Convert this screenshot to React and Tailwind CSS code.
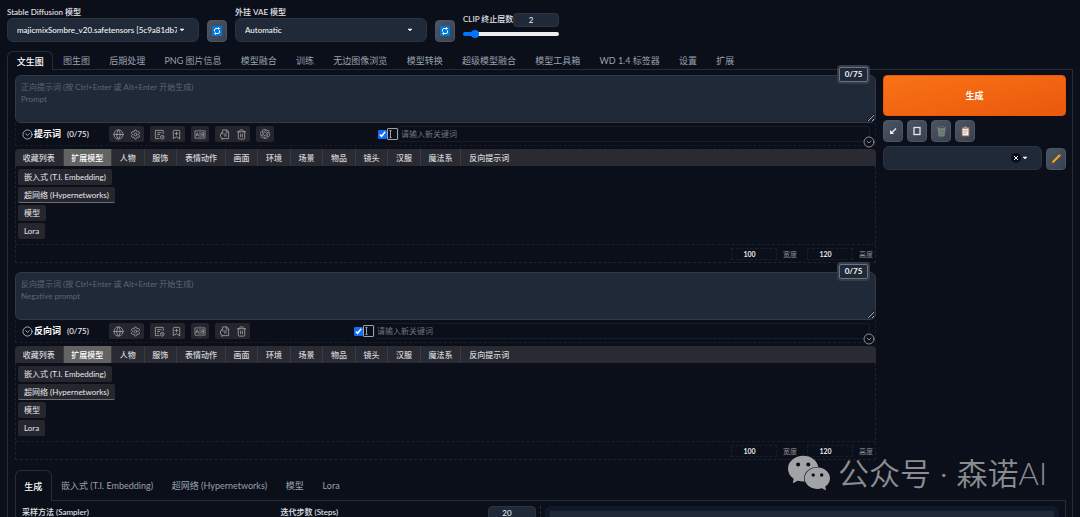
import { useState } from 'react';
import { Globe, Settings, Trash2, CircleChevronDown, BookmarkPlus } from 'lucide-react';
import { SiOpenai, SiWechat } from 'react-icons/si';

const mainTabs = ['文生图', '图生图', '后期处理', 'PNG 图片信息', '模型融合', '训练', '无边图像浏览', '模型转换', '超级模型融合', '模型工具箱', 'WD 1.4 标签器', '设置', '扩展'];
const keywordTabs = ['收藏列表', '扩展模型', '人物', '服饰', '表情动作', '画面', '环境', '场景', '物品', '镜头', '汉服', '魔法系', '反向提示词'];
const modelGroups = ['嵌入式 (T.I. Embedding)', '超网络 (Hypernetworks)', '模型', 'Lora'];
const extraTabs = ['生成', '嵌入式 (T.I. Embedding)', '超网络 (Hypernetworks)', '模型', 'Lora'];

function RefreshIcon() {
  return (
    <svg className="w-[10px] h-[10px]" viewBox="0 0 20 20" fill="none">
      <rect width="20" height="20" rx="1" fill="#0078d7" />
      <path d="M5 11V8q0-3 3-3h5M15 9v3q0 3-3 3H7" stroke="#fff" strokeWidth="2" />
      <path d="M12 2l4 3-4 3zM8 12l-4 3 4 3z" fill="#fff" />
    </svg>
  );
}

function ArrowIcon() {
  return (
    <svg className="w-[10px] h-[10px]" viewBox="0 0 20 20" fill="none">
      <path d="M16 5L8 13" stroke="#f3f4f6" strokeWidth="2.5" />
      <path d="M4 8v8h8z" fill="#f3f4f6" />
    </svg>
  );
}

function CardIcon() {
  return (
    <svg className="w-[10px] h-[10px]" viewBox="0 0 20 20" fill="none">
      <rect x="4" y="3" width="12" height="14" stroke="#e5e7eb" strokeWidth="2.6" />
    </svg>
  );
}

function BasketIcon() {
  return (
    <svg className="w-[11px] h-[11px]" viewBox="0 0 22 22" fill="none">
      <path d="M3 3h16l-2 17q-6 2-12 0z" fill="#7b8987" />
      <path d="M5 7l11 12M9 5l8 9M5 13l6 7M17 7L6 19M13 5l-8 9M17 13l-6 7" stroke="#4c5957" strokeWidth="1" />
      <ellipse cx="11" cy="3.5" rx="8.5" ry="2" fill="#39433f" stroke="#9aa7a3" strokeWidth="1" />
    </svg>
  );
}

function ClipboardIcon() {
  return (
    <svg className="w-[11px] h-[11px]" viewBox="0 0 22 22" fill="none">
      <rect x="3" y="2" width="16" height="19" rx="1" fill="#a65f33" />
      <path d="M5 5h12v14H5z" fill="#f4f1ee" />
      <path d="M8 1h6v5H8z" fill="#8b949c" />
      <path d="M7 9h8M7 12h8M7 15h5" stroke="#9aa0a8" strokeWidth="1.2" />
    </svg>
  );
}

function PencilIcon() {
  return (
    <svg className="w-[12px] h-[12px]" viewBox="0 0 24 24" fill="none">
      <path d="M3 21l1-5 4 4z" fill="#d9480f" />
      <path d="M4 17L18 3l3 3L7 20z" fill="#fbb11b" />
      <path d="M17 4l2-2 3 3-2 2z" fill="#ef8a2f" />
      <path d="M6 19L20 5" stroke="#d97706" strokeWidth="1" />
    </svg>
  );
}

function HistoryIcon() {
  return (
    <svg className="w-[11px] h-[11px]" viewBox="0 0 24 24" fill="none" stroke="currentColor" strokeWidth="2">
      <path d="M20 11V3H3v18h9M7 8h9M7 12h6M7 16h3" />
      <circle cx="18" cy="18" r="4" />
      <path d="M18 16v2h2" />
    </svg>
  );
}

function TranslateIcon() {
  return (
    <svg className="w-[12px] h-[11px]" viewBox="0 0 26 24" fill="none" stroke="currentColor" strokeWidth="1.8">
      <path d="M11 4H2v16h9M15 4h9v16h-9M13 1v22" />
      <path d="M4 16l3-8 3 8M5 13h4M17 8h4v8h-4zM17 12h4" />
    </svg>
  );
}

function CopyIcon() {
  return (
    <svg className="w-[11px] h-[11px]" viewBox="0 0 24 24" fill="none" stroke="currentColor" strokeWidth="2">
      <path d="M8 7V2h9l4 4v15h-6M16 2v5h5M11 11h6M11 15h6" />
      <path d="M7 8q-5 2-4 8 1 4 5 5h7M5 19l3 2-2 3M4 9l4-1 1 4" />
    </svg>
  );
}

function AppendIcon() {
  return (
    <svg className="w-[11px] h-[12px] shrink-0" viewBox="0 0 22 24" fill="none" stroke="#a1a1aa" strokeWidth="2">
      <rect x="1" y="1" width="20" height="22" rx="1" />
      <path d="M7 5v14M5 5h4M5 19h4" />
    </svg>
  );
}

function Caret({ className }) {
  return (
    <svg className={`w-[6px] h-[4px] pointer-events-none ${className}`} viewBox="0 0 6 4">
      <path d="M1 1h4L3 3z" fill="#f3f4f6" stroke="#f3f4f6" strokeWidth="0.6" />
    </svg>
  );
}

function ToolButton({ label, children }) {
  return (
    <button
      type="button"
      aria-label={label}
      className="h-[22px] w-[20px] rounded border border-[#4b5563] bg-linear-to-br from-[#4b5563] to-[#374151] flex items-center justify-center"
    >
      {children}
    </button>
  );
}

function ModelSelect({ id, label, value }) {
  return (
    <div className="w-[192px]">
      <label htmlFor={id} className="block h-[12px] leading-[12px] font-medium text-gray-200">{label}</label>
      <div className="relative">
        <select
          id={id}
          className="block w-full h-[24px] appearance-none rounded-md border border-[#2a3445] bg-[#1f2937] pl-[9px] pr-[21px] font-medium text-gray-100"
        >
          <option>{value}</option>
        </select>
        <Caret className="absolute right-[14px] top-[10px]" />
      </div>
    </div>
  );
}

function TabBar({ tabs, active, onSelect, className, listClassName }) {
  return (
    <nav className={`flex text-[9px] ${className}`}>
      <div className={`flex ${listClassName}`}>
        {tabs.map((name) => (
          <button
            key={name}
            type="button"
            onClick={() => onSelect(name)}
            className={`flex-auto whitespace-nowrap pt-[2px] ${name === active ? 'rounded-t-md border-x border-t border-[#252d3a] px-[8px] font-medium text-white' : 'border-b border-[#252d3a] px-[9px] text-gray-400'}`}
          >
            {name}
          </button>
        ))}
      </div>
      <div className="flex-1 border-b border-[#252d3a]" />
    </nav>
  );
}

function IconGroup({ items }) {
  return (
    <div className="flex h-[16px] gap-px rounded-xs bg-[#25262d] px-px text-[#97989c]">
      {items.map(([name, icon]) => (
        <button key={name} type="button" aria-label={name} className="w-[16px] flex items-center justify-center">
          {icon}
        </button>
      ))}
    </div>
  );
}

function PromptBlock({ id, title, placeholder, hasAi }) {
  const [active, setActive] = useState('扩展模型');

  return (
    <section>
      <div className="relative">
        <textarea
          aria-label={title}
          placeholder={placeholder}
          className="block w-full h-[48px] resize-y rounded-md border border-[#2f3a4a] bg-[#1f2937] px-[5px] py-[5px] leading-[12px] text-gray-200 placeholder:text-[#5d6776]"
        />
        <span className="absolute right-[8px] top-[-8px] h-[15px] w-[29px] rounded-xs border border-[#6b7280] bg-[#1f2937] text-center leading-[13px] font-bold text-gray-100 ring-2 ring-[#363d49]">
          0/75
        </span>
      </div>

      <div className="relative flex h-[23px] items-center border-x border-b border-dashed border-[#171e2a] pl-[6px] pr-[5px]">
        <div className="flex w-[87px] items-center gap-px">
          <CircleChevronDown size={11} strokeWidth={1.5} className="text-gray-200" />
          <h2 className="text-[9px] font-bold text-white">{title}</h2>
          <span className="ml-[5px] font-medium text-gray-100">(0/75)</span>
        </div>
        <div className="flex gap-[6px]">
          <IconGroup items={[['语言', <Globe size={11} />], ['设置', <Settings size={11} />]]} />
          <IconGroup items={[['历史', <HistoryIcon />], ['收藏', <BookmarkPlus size={11} />]]} />
          <IconGroup items={[['翻译', <TranslateIcon />]]} />
          <IconGroup items={[['复制', <CopyIcon />], ['删除', <Trash2 size={11} />]]} />
          {hasAi && <IconGroup items={[['AI', <SiOpenai size={10} />]]} />}
        </div>
        <div className="ml-[104px] flex flex-1 items-center">
          <input
            type="checkbox"
            defaultChecked
            aria-label="启用"
            className="m-0 h-[9px] w-[9px] shrink-0 accent-[#0d6efd]"
          />
          <AppendIcon />
          <input
            type="text"
            aria-label="新关键词"
            placeholder="请输入新关键词"
            className="h-[16px] min-w-0 flex-1 rounded-xs border border-[#171c27] px-[2px] text-gray-200 placeholder:text-[#72757c]"
          />
        </div>
        <button type="button" aria-label="折叠" className="absolute right-0 top-[13px] rounded-full bg-[#0b0f19] text-[#b5b7bb]">
          <CircleChevronDown size={12} strokeWidth={1.5} />
        </button>
      </div>

      <div className="mt-[3px] h-[17px] overflow-hidden rounded-t bg-[#2a2b32]">
        <div className="flex h-full w-[502px]">
          {keywordTabs.map((tab) => (
            <button
              key={tab}
              type="button"
              onClick={() => setActive(tab)}
              className={`flex-auto whitespace-nowrap border-r border-[#3a3b42] px-[6px] font-medium last:border-r-0 ${tab === active ? 'bg-[#636363] text-white' : 'text-gray-300'}`}
            >
              {tab}
            </button>
          ))}
        </div>
      </div>

      <div className="border-x border-b border-dashed border-[#1a2531] pt-[3px]">
        <div className="flex flex-col items-start gap-[2px] px-[2px] pb-[5px]">
          {modelGroups.map((name, i) => (
            <button
              key={name}
              type="button"
              className={`h-[16px] rounded-xs bg-[#26272e] px-[6px] leading-[14px] text-gray-200 border-b ${i === 1 ? 'border-[#6b6c6e]' : 'border-transparent'}`}
            >
              {name}
            </button>
          ))}
        </div>
        <div className="flex h-[18px] items-center justify-end gap-[6px] border-t border-dashed border-[#14202e] pr-[2px] text-[7px]">
          <input
            id={`${id}-width`}
            defaultValue="100"
            inputMode="numeric"
            className="h-[12px] w-[46px] border border-dashed border-[#14202e] pr-[9px] text-center font-bold text-gray-200"
          />
          <label htmlFor={`${id}-width`} className="mr-[4px] text-[#8b8e94]">宽度</label>
          <input
            id={`${id}-height`}
            defaultValue="120"
            inputMode="numeric"
            className="h-[12px] w-[46px] border border-dashed border-[#14202e] pr-[9px] text-center font-bold text-gray-200"
          />
          <label htmlFor={`${id}-height`} className="text-[#8b8e94]">高度</label>
        </div>
      </div>
    </section>
  );
}

export default function App() {
  const [tab, setTab] = useState('文生图');
  const [extraTab, setExtraTab] = useState('生成');

  return (
    <div className="relative h-screen overflow-hidden bg-[#0b0f19] px-[7px] pt-[6px] font-[Lato,'Noto_Sans_CJK_SC',sans-serif] text-[8px] leading-[12px] text-gray-200">
      {/* Checkpoint, VAE and clip skip */}
      <header className="flex items-end gap-[8px]">
        <ModelSelect id="checkpoint" label="Stable Diffusion 模型" value="majicmixSombre_v20.safetensors [5c9a81db7a]" />
        <ToolButton label="刷新模型"><RefreshIcon /></ToolButton>
        <ModelSelect id="vae" label="外挂 VAE 模型" value="Automatic" />
        <ToolButton label="刷新 VAE"><RefreshIcon /></ToolButton>
        <div className="w-[96px] pb-[4px]">
          <div className="flex items-start justify-between">
            <label htmlFor="clip" className="whitespace-nowrap font-medium">CLIP 终止层数</label>
            <input
              aria-label="CLIP 终止层数"
              defaultValue="2"
              inputMode="numeric"
              className="h-[14px] w-[48px] min-w-0 rounded border border-[#2a3445] bg-[#1f2937] pr-[10px] text-center font-medium"
            />
          </div>
          <input
            id="clip"
            type="range"
            min="1"
            max="12"
            defaultValue="2"
            className="mt-[3px] block h-[8px] w-full appearance-none bg-transparent [&::-webkit-slider-runnable-track]:h-[4px] [&::-webkit-slider-runnable-track]:rounded-full [&::-webkit-slider-runnable-track]:bg-linear-to-r [&::-webkit-slider-runnable-track]:from-[#0075ff] [&::-webkit-slider-runnable-track]:from-13% [&::-webkit-slider-runnable-track]:to-[#efefef] [&::-webkit-slider-runnable-track]:to-13% [&::-webkit-slider-thumb]:mt-[-2px] [&::-webkit-slider-thumb]:h-[8px] [&::-webkit-slider-thumb]:w-[8px] [&::-webkit-slider-thumb]:appearance-none [&::-webkit-slider-thumb]:rounded-full [&::-webkit-slider-thumb]:bg-[#0075ff]"
          />
        </div>
      </header>

      <TabBar tabs={mainTabs} active={tab} onSelect={setTab} className="mt-[9px] h-[19px]" listClassName="w-[737px]" />

      <main className="border-x border-[#252d3a] pl-[7px] pr-[6px] pt-[5px]">
        <div className="flex gap-[7px]">
          <div className="flex min-w-0 flex-1 flex-col gap-[9px]">
            <PromptBlock id="positive" title="提示词" placeholder={'正向提示词 (按 Ctrl+Enter 或 Alt+Enter 开始生成)\nPrompt'} hasAi />
            <PromptBlock id="negative" title="反向词" placeholder={'反向提示词 (按 Ctrl+Enter 或 Alt+Enter 开始生成)\nNegative prompt'} />
          </div>

          <aside className="w-[183px]">
            <button
              type="button"
              className="block h-[41px] w-full rounded border border-[#ea580c] bg-linear-to-br from-[#f97316] to-[#ea580c] text-[9px] font-bold text-white"
            >
              生成
            </button>
            <div className="mt-[4px] flex gap-[4px]">
              <ToolButton label="读取参数"><ArrowIcon /></ToolButton>
              <ToolButton label="额外网络"><CardIcon /></ToolButton>
              <ToolButton label="清空"><BasketIcon /></ToolButton>
              <ToolButton label="应用样式"><ClipboardIcon /></ToolButton>
            </div>
            <div className="mt-[4px] flex items-end gap-[4px]">
              <div className="relative flex-1">
                <select aria-label="样式" className="block h-[24px] w-full appearance-none rounded-md border border-[#2a3445] bg-[#1f2937]">
                  <option />
                </select>
                <button type="button" aria-label="清除" className="absolute right-[21px] top-[7px] flex h-[10px] w-[10px] items-center justify-center rounded-full bg-[#0b0f19]">
                  <svg className="w-[6px] h-[6px]" viewBox="0 0 6 6">
                    <path d="M1 1l4 4M5 1L1 5" stroke="#fff" />
                  </svg>
                </button>
                <Caret className="absolute right-[14px] top-[10px]" />
              </div>
              <ToolButton label="编辑样式"><PencilIcon /></ToolButton>
            </div>
          </aside>
        </div>

        {/* Generation settings */}
        <TabBar tabs={extraTabs} active={extraTab} onSelect={setExtraTab} className="mt-[10px] h-[31px]" listClassName="w-[334px]" />
        <div className="flex h-[120px] gap-[4px] border-x border-[#252d3a] px-[6px] pt-[5px]">
          <div className="flex w-1/2 shrink-0 border-r border-dashed border-[#2a3240] pr-[4px]">
            <span className="flex-1 font-medium">采样方法 (Sampler)</span>
            <div className="flex w-[255px] justify-between">
              <label htmlFor="steps" className="font-medium">迭代步数 (Steps)</label>
              <input
                id="steps"
                defaultValue="20"
                inputMode="numeric"
                className="h-[14px] w-[48px] rounded border border-[#2a3445] bg-[#1f2937] pr-[9px] text-center font-medium"
              />
            </div>
          </div>
          <div className="flex-1 rounded-t-md bg-[#111827] px-[5px] pt-[5px]">
            <div className="h-full bg-[#1f2937]" />
          </div>
        </div>
      </main>

      {/* Watermark */}
      <div className="absolute bottom-[23px] right-[33px] flex items-center gap-[8px] text-[31px] leading-[30px] font-[350] text-[#8b8c90]">
        <SiWechat size={42} className="text-[#a2a3a6]" />
        <div className="flex gap-[9px]">
          <span>公众号</span>
          <span>·</span>
          <span>森诺AI</span>
        </div>
      </div>
    </div>
  );
}
